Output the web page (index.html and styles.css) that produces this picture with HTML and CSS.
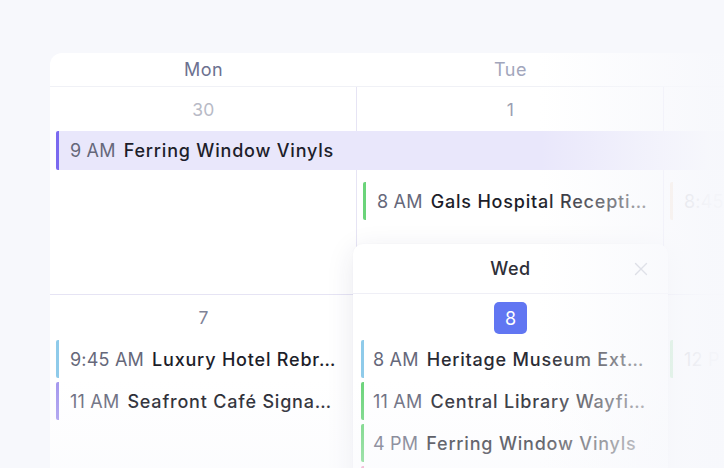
FILE: index.html
```html
<!DOCTYPE html>
<html>
<head>
<meta charset="utf-8">
<link rel="stylesheet" href="styles.css">
</head>
<body>
<div class="page">
  <div class="card">
    <div class="days">
      <div class="day">Mon</div>
      <div class="day light">Tue</div>
      <div class="day"></div>
    </div>
    <div class="week week1">
      <div class="date other">30</div>
      <div class="date">1</div>
      <div class="date"></div>
      <div class="ev span purple"><span class="time">9 AM</span><span class="title">Ferring Window Vinyls</span></div>
      <div class="ev c2 green"><span class="time">8 AM</span><span class="title">Gals Hospital Recepti…</span></div>
      <div class="ev c3 orange faint"><span class="time">8:45</span></div>
    </div>
    <div class="week week2">
      <div class="date dark">7</div>
      <div class="date"></div>
      <div class="date"></div>
      <div class="ev c1 r2 blue"><span class="time">9:45 AM</span><span class="title">Luxury Hotel Rebr…</span></div>
      <div class="ev c1 r3 lilac"><span class="time">11 AM</span><span class="title">Seafront Café Signa…</span></div>
      <div class="ev c3 r2 green faint"><span class="time">12 P</span></div>
    </div>
  </div>

  <div class="popup">
    <div class="pop-head">
      <span class="pop-day">Wed</span>
      <svg class="close" width="14" height="14" viewBox="0 0 14 14"><path d="M1.5 1.5 L12.5 12.5 M12.5 1.5 L1.5 12.5" stroke="#b9bcc8" stroke-width="1.4" fill="none" stroke-linecap="round"/></svg>
    </div>
    <div class="pop-date"><span class="badge">8</span></div>
    <div class="pop-list">
      <div class="ev blue"><span class="time">8 AM</span><span class="title">Heritage Museum Ext…</span></div>
      <div class="ev green"><span class="time">11 AM</span><span class="title">Central Library Wayfi…</span></div>
      <div class="ev green"><span class="time">4 PM</span><span class="title">Ferring Window Vinyls</span></div>
      <div class="ev pink"></div>
    </div>
  </div>

  <div class="fade"></div>
</div>
</body>
</html>
```

FILE: styles.css
```css
* { box-sizing: border-box; }
html, body {
  margin: 0;
  padding: 0;
  width: 724px;
  height: 468px;
  overflow: hidden;
  background: #f7f8fc;
  font-family: "Inter", "Open Sans", sans-serif;
}
.page {
  position: relative;
  width: 724px;
  height: 468px;
  overflow: hidden;
  padding: 53px 0 0 50px;
}
.card {
  width: 921px;
  background: #ffffff;
  border-radius: 12px 0 0 0;
}
.days {
  display: grid;
  grid-template-columns: 307px 307px 307px;
  height: 34px;
  border-bottom: 1px solid #f0f1f6;
}
.day {
  display: flex;
  align-items: center;
  justify-content: center;
  font-size: 18px;
  letter-spacing: 0.5px;
  color: #6c7190;
  padding-bottom: 1px;
}
.day.light { color: #a2a6bc; }
.week {
  display: grid;
  grid-template-columns: 307px 307px 307px;
  background-image: linear-gradient(to right, transparent 306px, #e6e4f4 306px, #e6e4f4 307px, transparent 307px);
  background-size: 307px 100%;
  border-bottom: 1px solid #e6e4f4;
}
.week1 {
  height: 208px;
  grid-template-rows: 44px 45px 44px;
  align-content: start;
}
.week2 {
  height: 200px;
  grid-template-rows: 45px 42px 42px;
  align-content: start;
}
.date {
  display: flex;
  align-items: center;
  justify-content: center;
  font-size: 17.5px;
  letter-spacing: 0.3px;
  color: #9c9fb2;
}
.date.other { color: #b8bac6; }
.date.dark { color: #7f8397; }

.ev {
  height: 38px;
  display: flex;
  align-items: center;
  gap: 8px;
  margin-left: 6px;
  padding-left: 11px;
  border-left: 3px solid #999;
  border-radius: 2px;
  font-size: 18px;
  white-space: nowrap;
  overflow: hidden;
}
.time { color: #66687a; font-weight: 400; letter-spacing: 0.2px; }
.title { color: #1d1e2a; font-weight: 500; letter-spacing: 0.8px; }

.span {
  grid-column: 1 / -1;
  grid-row: 2;
  height: 39px;
  margin-right: 6px;
  background: #e9e7fb;
}
.c1 { grid-column: 1; }
.c2 { grid-column: 2; grid-row: 3; margin-top: 6px; }
.c3 { grid-column: 3; grid-row: 3; margin-top: 6px; }
.week2 .c3 { grid-row: 2; margin-top: 0; }
.r2 { grid-row: 2; }
.r3 { grid-row: 3; }

.purple { border-left-color: #7b6af0; }
.green { border-left-color: #6bd47a; }
.blue { border-left-color: #8fcbea; }
.lilac { border-left-color: #a598ee; }
.orange { border-left-color: #f1c9a2; }
.pink { border-left-color: #f09ac3; }
.faint { opacity: 0.6; }

.popup {
  position: absolute;
  left: 353px;
  top: 244px;
  width: 315px;
  height: 260px;
  background: #ffffff;
  border-radius: 10px;
  box-shadow: 0 6px 28px rgba(40, 40, 90, 0.10), 0 0 2px rgba(40, 40, 90, 0.04);
}
.pop-head {
  position: relative;
  height: 50px;
  display: flex;
  align-items: center;
  justify-content: center;
  border-bottom: 1px solid #efeff6;
}
.pop-day {
  font-size: 18px;
  letter-spacing: 0.6px;
  color: #2e2f38;
  font-weight: 500;
}
.close {
  position: absolute;
  right: 20px;
  top: 18px;
}
.pop-date {
  display: flex;
  justify-content: center;
  padding-top: 8px;
}
.badge {
  width: 33px;
  height: 32px;
  border-radius: 5px;
  background: #6176f2;
  color: #ffffff;
  font-size: 18px;
  display: flex;
  align-items: center;
  justify-content: center;
}
.pop-list {
  display: flex;
  flex-direction: column;
  gap: 4px;
  margin-top: 6px;
}
.pop-list .ev {
  margin-left: 8px;
  padding-left: 9px;
}
.pop-list .title { color: #2a2b34; }

.fade {
  position: absolute;
  inset: 0;
  pointer-events: none;
  background:
    linear-gradient(to right, rgba(247,248,252,0) 540px, rgba(247,248,252,0.6) 640px, rgba(247,248,252,0.96) 710px),
    linear-gradient(to bottom, rgba(247,248,252,0) 380px, rgba(247,248,252,0.4) 468px);
}
```
